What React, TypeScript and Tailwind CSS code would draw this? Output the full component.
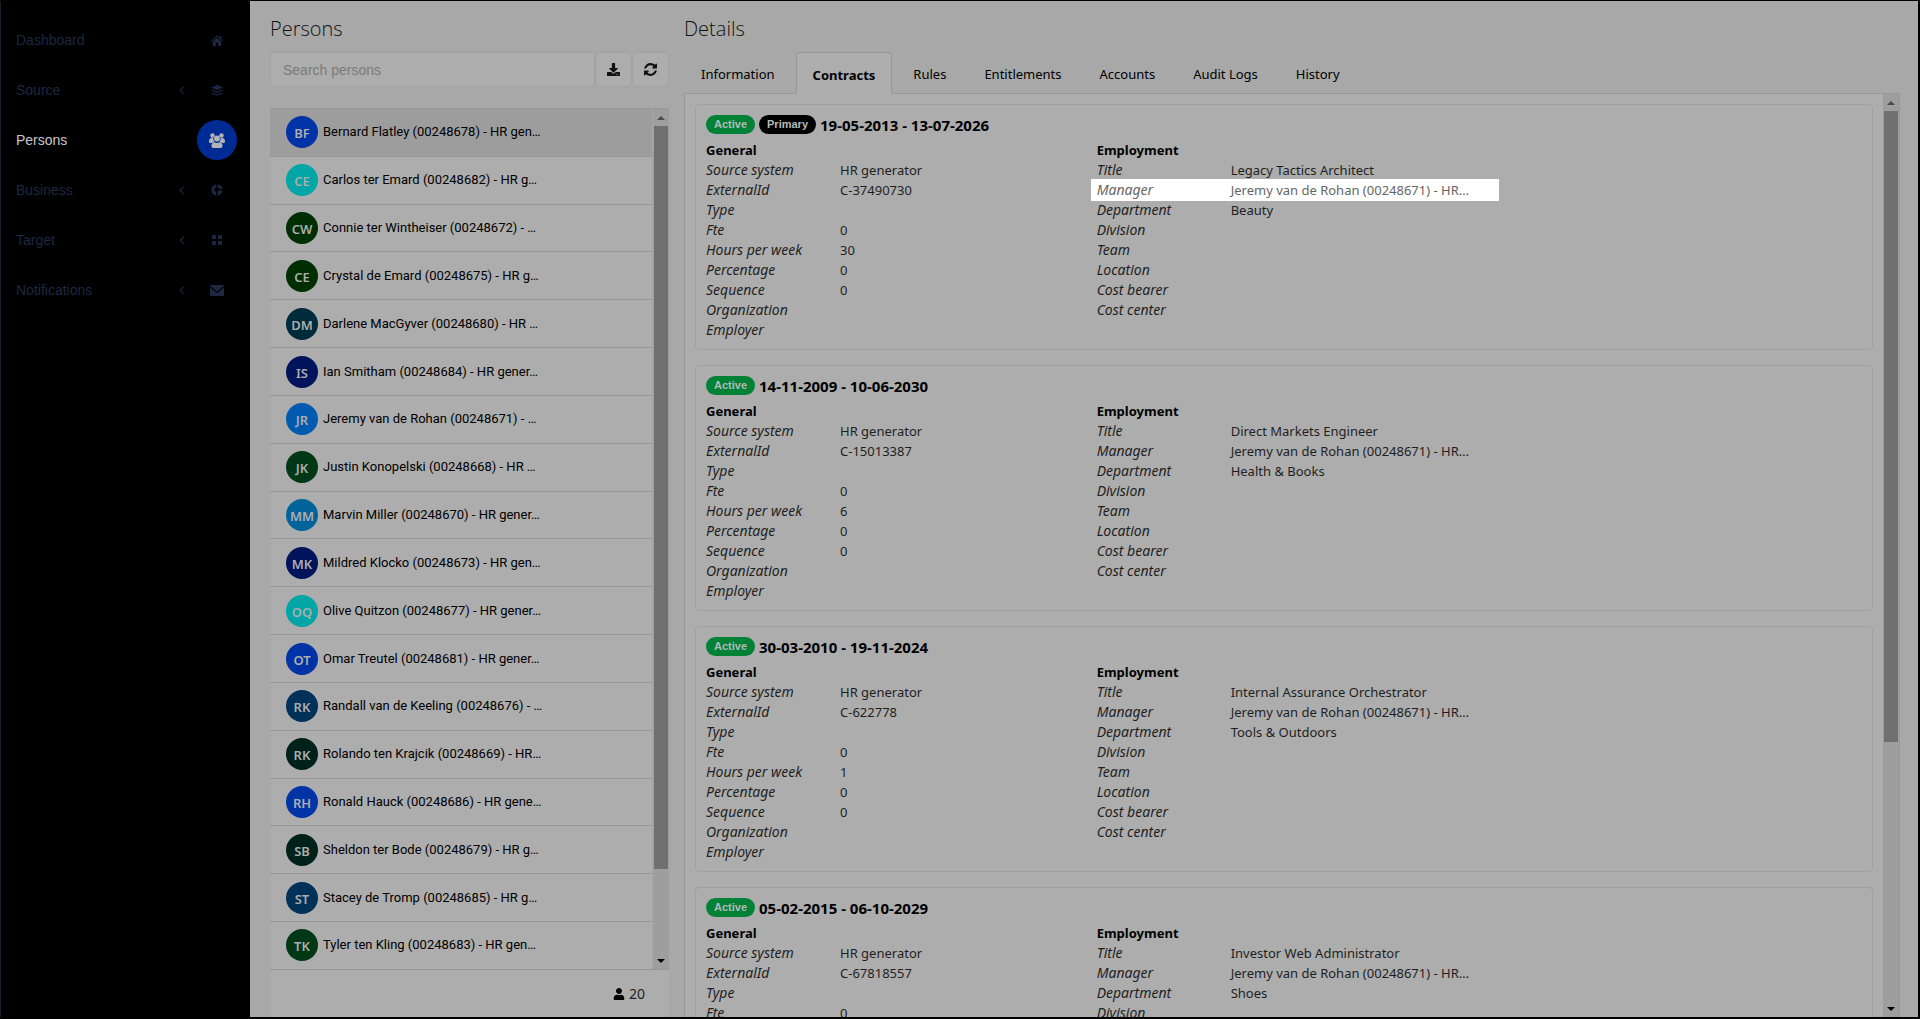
import { FaDownload, FaUser } from 'react-icons/fa'

const menu = [
  { label: 'Dashboard', icon: 'home', expandable: false },
  { label: 'Source', icon: 'layers', expandable: true },
  { label: 'Persons', icon: 'people', expandable: false, active: true },
  { label: 'Business', icon: 'globe', expandable: true },
  { label: 'Target', icon: 'grid', expandable: true },
  { label: 'Notifications', icon: 'mail', expandable: true },
]

const persons = [
  { initials: 'BF', name: 'Bernard Flatley (00248678) - HR gen…', color: 'bg-[#0033a6]' },
  { initials: 'CE', name: 'Carlos ter Emard (00248682) - HR g…', color: 'bg-[#00a5a5]' },
  { initials: 'CW', name: 'Connie ter Wintheiser (00248672) - …', color: 'bg-[#002e00]' },
  { initials: 'CE', name: 'Crystal de Emard (00248675) - HR g…', color: 'bg-[#002e00]' },
  { initials: 'DM', name: 'Darlene MacGyver (00248680) - HR …', color: 'bg-[#002b3a]' },
  { initials: 'IS', name: 'Ian Smitham (00248684) - HR gener…', color: 'bg-[#00145c]' },
  { initials: 'JR', name: 'Jeremy van de Rohan (00248671) - …', color: 'bg-[#005ab0]' },
  { initials: 'JK', name: 'Justin Konopelski (00248668) - HR …', color: 'bg-[#003816]' },
  { initials: 'MM', name: 'Marvin Miller (00248670) - HR gener…', color: 'bg-[#00649a]' },
  { initials: 'MK', name: 'Mildred Klocko (00248673) - HR gen…', color: 'bg-[#00145c]' },
  { initials: 'OQ', name: 'Olive Quitzon (00248677) - HR gener…', color: 'bg-[#00a5a5]' },
  { initials: 'OT', name: 'Omar Treutel (00248681) - HR gener…', color: 'bg-[#0033a6]' },
  { initials: 'RK', name: 'Randall van de Keeling (00248676) - …', color: 'bg-[#003158]' },
  { initials: 'RK', name: 'Rolando ten Krajcik (00248669) - HR…', color: 'bg-[#002119]' },
  { initials: 'RH', name: 'Ronald Hauck (00248686) - HR gene…', color: 'bg-[#0033a6]' },
  { initials: 'SB', name: 'Sheldon ter Bode (00248679) - HR g…', color: 'bg-[#002119]' },
  { initials: 'ST', name: 'Stacey de Tromp (00248685) - HR g…', color: 'bg-[#003158]' },
  { initials: 'TK', name: 'Tyler ten Kling (00248683) - HR gen…', color: 'bg-[#003816]' },
]

const tabs = ['Information', 'Contracts', 'Rules', 'Entitlements', 'Accounts', 'Audit Logs', 'History']

const manager = 'Jeremy van de Rohan (00248671) - HR…'

const contracts = [
  { period: '19-05-2013 - 13-07-2026', primary: true, id: 'C-37490730', hours: '30', title: 'Legacy Tactics Architect', department: 'Beauty' },
  { period: '14-11-2009 - 10-06-2030', primary: false, id: 'C-15013387', hours: '6', title: 'Direct Markets Engineer', department: 'Health & Books' },
  { period: '30-03-2010 - 19-11-2024', primary: false, id: 'C-622778', hours: '1', title: 'Internal Assurance Orchestrator', department: 'Tools & Outdoors' },
  { period: '05-02-2015 - 06-10-2029', primary: false, id: 'C-67818557', hours: '', title: 'Investor Web Administrator', department: 'Shoes' },
]

function MenuIcon({ name }: { name: string }) {
  if (name === 'home') {
    return (
      <svg viewBox="0 0 12 11" className="h-[11px] w-3" fill="currentColor">
        <path d="M6 .3 8.500 2.600V.8h1.700v3.300L12 5.700l-.7.8L6 1.700.7 6.500 0 5.700z" />
        <path d="M6 2.800 10.200 6.500V11H7.200V7.500H4.800V11h-3V6.500z" />
      </svg>
    )
  }
  if (name === 'layers') {
    return (
      <svg viewBox="0 0 12 11" className="h-[11px] w-3" fill="currentColor">
        <path d="M6 0 12 2.500 6 5 0 2.500z" />
        <path d="M1.500 4.700 6 6.600l4.500-1.900L12 5.300 6 7.900 0 5.300z" />
        <path d="M1.500 7.600 6 9.500l4.500-1.900 1.500.6-6 2.600-6-2.600z" />
      </svg>
    )
  }
  if (name === 'grid') {
    return (
      <svg viewBox="0 0 10 10" className="size-[10px]" fill="currentColor">
        <rect x="0" y="0" width="4" height="4" rx="0.6" />
        <rect x="6" y="0" width="4" height="4" rx="0.6" />
        <rect x="0" y="6" width="4" height="4" rx="0.6" />
        <rect x="6" y="6" width="4" height="4" rx="0.6" />
      </svg>
    )
  }
  if (name === 'mail') {
    return (
      <svg viewBox="0 0 14 11" className="h-[11px] w-[14px]" fill="currentColor">
        <path d="M0 0h14v1L7 6.500 0 1z" />
        <path d="M0 2.500 7 8l7-5.500V11H0z" />
      </svg>
    )
  }
  if (name === 'globe') {
    return (
      <svg viewBox="0 0 12 12" className="size-3" fill="currentColor">
        <path d="M5.300.5v3.200L3.200 4.800v2.400l2.100.4v3.800A5.500 5.500 0 0 1 5.300.5z" />
        <path d="M6.700.5a5.500 5.500 0 0 1 4.800 4.800H9.800L6.700 3.600z" />
        <path d="M6.700 7.600l2-1h2.800a5.500 5.500 0 0 1-4.800 4.900z" />
      </svg>
    )
  }
  return (
    <svg viewBox="0 0 16 15" className="h-[15px] w-4" fill="currentColor">
      <circle cx="3.500" cy="2.500" r="2.200" />
      <circle cx="12.500" cy="2.500" r="2.200" />
      <path d="M0 8.500C0 6.500 1 5 2.700 5h1.500c0 2 .6 3 1.600 3.900-1.400.1-2.100.4-2.800 1H1C.3 9.900 0 9.300 0 8.500z" />
      <path d="M16 8.500C16 6.500 15 5 13.300 5h-1.500c0 2-.6 3-1.600 3.900 1.400.1 2.100.4 2.800 1h2c.7 0 1-.6 1-1.400z" />
      <circle cx="8" cy="5.500" r="3" />
      <path d="M2.500 13c0-2 1-3.700 3-3.700.7.500 1.500.8 2.500.8s1.800-.3 2.500-.8c2 0 3 1.700 3 3.700 0 1.200-.7 2-2 2h-7c-1.300 0-2-.8-2-2z" />
    </svg>
  )
}

function ChevronIcon() {
  return (
    <svg viewBox="0 0 6 10" className="mr-3 h-[9px] w-[6px]" fill="none" stroke="currentColor" strokeWidth="1.2">
      <path d="M5 1 1 5l4 4" />
    </svg>
  )
}

function RefreshIcon() {
  return (
    <svg viewBox="0 0 1536 1536" className="size-[13px]" fill="currentColor">
      <path d="M1511 928q0 5-1 7-64 268-268 434.500T764 1536q-146 0-282.500-55T238 1324l-129 129q-19 19-45 19t-45-19-19-45V960q0-26 19-45t45-19h448q26 0 45 19t19 45-19 45l-137 137q71 66 161 102t187 36q134 0 250-65t186-179q11-17 53-117 8-23 30-23h192q13 0 22.500 9.500t9.500 22.500zM1536 128v448q0 26-19 45t-45 19h-448q-26 0-45-19t-19-45 19-45l138-138Q969 256 768 256q-134 0-250 65T332 500q-11 17-53 117-8 23-30 23H50q-13 0-22.500-9.500T18 608v-7q65-268 270-434.500T768 0q146 0 284 55.500T1297 212l130-129q19-19 45-19t45 19 19 45z" />
    </svg>
  )
}

function Scrollbar({ thumb }: { thumb: string }) {
  return (
    <div className="flex w-4 shrink-0 flex-col items-center bg-[#9e9e9e]">
      <div className="flex h-[17px] shrink-0 items-center">
        <div className="border-x-4 border-b-4 border-x-transparent border-b-[#4a4a4a]" />
      </div>
      <div className="min-h-0 w-full flex-1 px-px">
        <div className={`w-full bg-[#707070] ${thumb}`} />
      </div>
      <div className="flex h-[17px] shrink-0 items-center">
        <div className="border-x-4 border-t-4 border-x-transparent border-t-black" />
      </div>
    </div>
  )
}

function Fields({ heading, rows, highlight }: { heading: string; rows: string[][]; highlight?: string }) {
  return (
    <section>
      <h3 className="font-bold text-black">{heading}</h3>
      <dl>
        {rows.map(([label, value]) => (
          <div
            key={label}
            className={label === highlight ? '-mx-1.5 -my-px flex w-[408px] bg-white px-1.5 py-px text-[#666666]' : 'flex'}
          >
            <dt className="w-[134px] shrink-0 text-sm italic">{label}</dt>
            <dd className="whitespace-nowrap">{value}</dd>
          </div>
        ))}
      </dl>
    </section>
  )
}

export default function App() {
  return (
    <div className="flex h-screen overflow-hidden border-t border-r-2 border-b-2 border-black bg-[#a8a8a8] font-['Noto_Sans',sans-serif] text-[13px] leading-5 text-[#1f1f1f]">
      <nav className="w-[250px] shrink-0 border-l border-[#1a1f2b] bg-black pt-3.5 pr-[13px] pl-[15px] font-['Liberation_Sans',sans-serif] text-sm">
        <ul>
          {menu.map((item) => (
            <li key={item.label}>
              <a
                href="#"
                className={`flex h-[50px] items-center ${item.active ? 'text-[#c8c8c8]' : 'text-[#1d2740]'}`}
              >
                <span className="flex-1">{item.label}</span>
                {item.expandable && <ChevronIcon />}
                <span
                  className={`flex size-10 items-center justify-center rounded-full ${item.active ? 'bg-[#002b94] text-[#b4b4b4]' : ''}`}
                >
                  <MenuIcon name={item.icon} />
                </span>
              </a>
            </li>
          ))}
        </ul>
      </nav>

      <main className="flex min-w-0 flex-1 pr-[18px] pl-5">
        <section className="flex w-[399px] shrink-0 flex-col">
          <h1 className="mt-3 h-[39px] shrink-0 font-['Open_Sans',sans-serif] text-xl leading-8 font-light text-[#111111]">Persons</h1>
          <div className="flex h-[35px] shrink-0 text-[#111111]">
            <input
              type="text"
              aria-label="Search persons"
              placeholder="Search persons"
              className="min-w-0 flex-1 rounded-sm border border-[#a2a2a2] bg-[#adadad] px-3 font-['Liberation_Sans',sans-serif] text-sm placeholder:text-[#7a7a7a]"
            />
            <button aria-label="Download" className="flex w-[37px] items-center justify-center rounded-sm border border-[#a2a2a2] bg-[#adadad]">
              <FaDownload className="size-[13px]" />
            </button>
            <button aria-label="Refresh" className="flex w-[37px] items-center justify-center rounded-sm border border-[#a2a2a2] bg-[#adadad]">
              <RefreshIcon />
            </button>
          </div>

          <div className="mt-[21px] flex min-h-0 flex-1 border-y border-[#979797]">
            <ul className="mr-px flex min-w-0 flex-1 flex-col bg-[#adadad]">
              {persons.map((person, index) => (
                <li
                  key={person.name}
                  className={`flex min-h-0 flex-1 items-center gap-[5px] border-b border-[#979797] pl-4 last:border-b-0 ${index === 0 ? 'bg-[#9d9d9d]' : ''}`}
                >
                  <span
                    className={`flex size-8 shrink-0 items-center justify-center rounded-full pt-0.5 font-semibold text-[#adadad] ${person.color}`}
                  >
                    {person.initials}
                  </span>
                  <span className="font-['Roboto',sans-serif] whitespace-nowrap text-black">{person.name}</span>
                </li>
              ))}
            </ul>
            <Scrollbar thumb="h-[90%]" />
          </div>
          <footer className="flex h-[47px] shrink-0 items-center justify-end gap-1 bg-[#adadad] pr-6 text-sm">
            <FaUser className="size-3 text-black" />
            20
          </footer>
        </section>

        <section className="ml-[15px] flex min-w-0 flex-1 flex-col">
          <h1 className="mt-3 h-[39px] shrink-0 font-['Open_Sans',sans-serif] text-xl leading-8 font-light text-[#111111]">Details</h1>
          <div role="tablist" className="relative z-10 -mb-px flex h-[42px] shrink-0 gap-1 text-black">
            {tabs.map((tab) => (
              <button
                key={tab}
                role="tab"
                aria-selected={tab === 'Contracts'}
                className={`px-4 pt-0.5 ${tab === 'Contracts' ? 'rounded-t border border-b-0 border-[#979797] bg-[#adadad] font-bold' : 'border border-transparent'}`}
              >
                {tab}
              </button>
            ))}
          </div>
          <div className="flex min-h-0 flex-1 border border-b-0 border-[#979797] bg-[#adadad]">
            <div className="flex min-w-0 flex-1 flex-col gap-[15px] overflow-hidden p-2.5">
              {contracts.map((contract) => (
                <article key={contract.period} className="h-[246px] shrink-0 rounded border border-[#9f9f9f] px-2.5 pt-2.5">
                  <header className="flex h-[25px] items-start gap-1 font-bold text-black">
                    <span className="h-[19px] rounded-full bg-[#008236] px-2 font-['Liberation_Sans',sans-serif] text-[11px] leading-[18px] text-[#b8b8b8]">
                      Active
                    </span>
                    {contract.primary && (
                      <span className="h-[19px] rounded-full bg-black px-2 font-['Liberation_Sans',sans-serif] text-[11px] leading-[18px] text-[#b8b8b8]">
                        Primary
                      </span>
                    )}
                    <h2 className="text-[15px]">{contract.period}</h2>
                  </header>
                  <div className="grid grid-cols-3 gap-x-4">
                    <Fields
                      heading="General"
                      rows={[
                        ['Source system', 'HR generator'],
                        ['ExternalId', contract.id],
                        ['Type', ''],
                        ['Fte', '0'],
                        ['Hours per week', contract.hours],
                        ['Percentage', '0'],
                        ['Sequence', '0'],
                        ['Organization', ''],
                        ['Employer', ''],
                      ]}
                    />
                    <Fields
                      heading="Employment"
                      highlight={contract.primary ? 'Manager' : undefined}
                      rows={[
                        ['Title', contract.title],
                        ['Manager', manager],
                        ['Department', contract.department],
                        ['Division', ''],
                        ['Team', ''],
                        ['Location', ''],
                        ['Cost bearer', ''],
                        ['Cost center', ''],
                      ]}
                    />
                  </div>
                </article>
              ))}
            </div>
            <Scrollbar thumb="h-[71%]" />
          </div>
        </section>
      </main>
    </div>
  )
}
